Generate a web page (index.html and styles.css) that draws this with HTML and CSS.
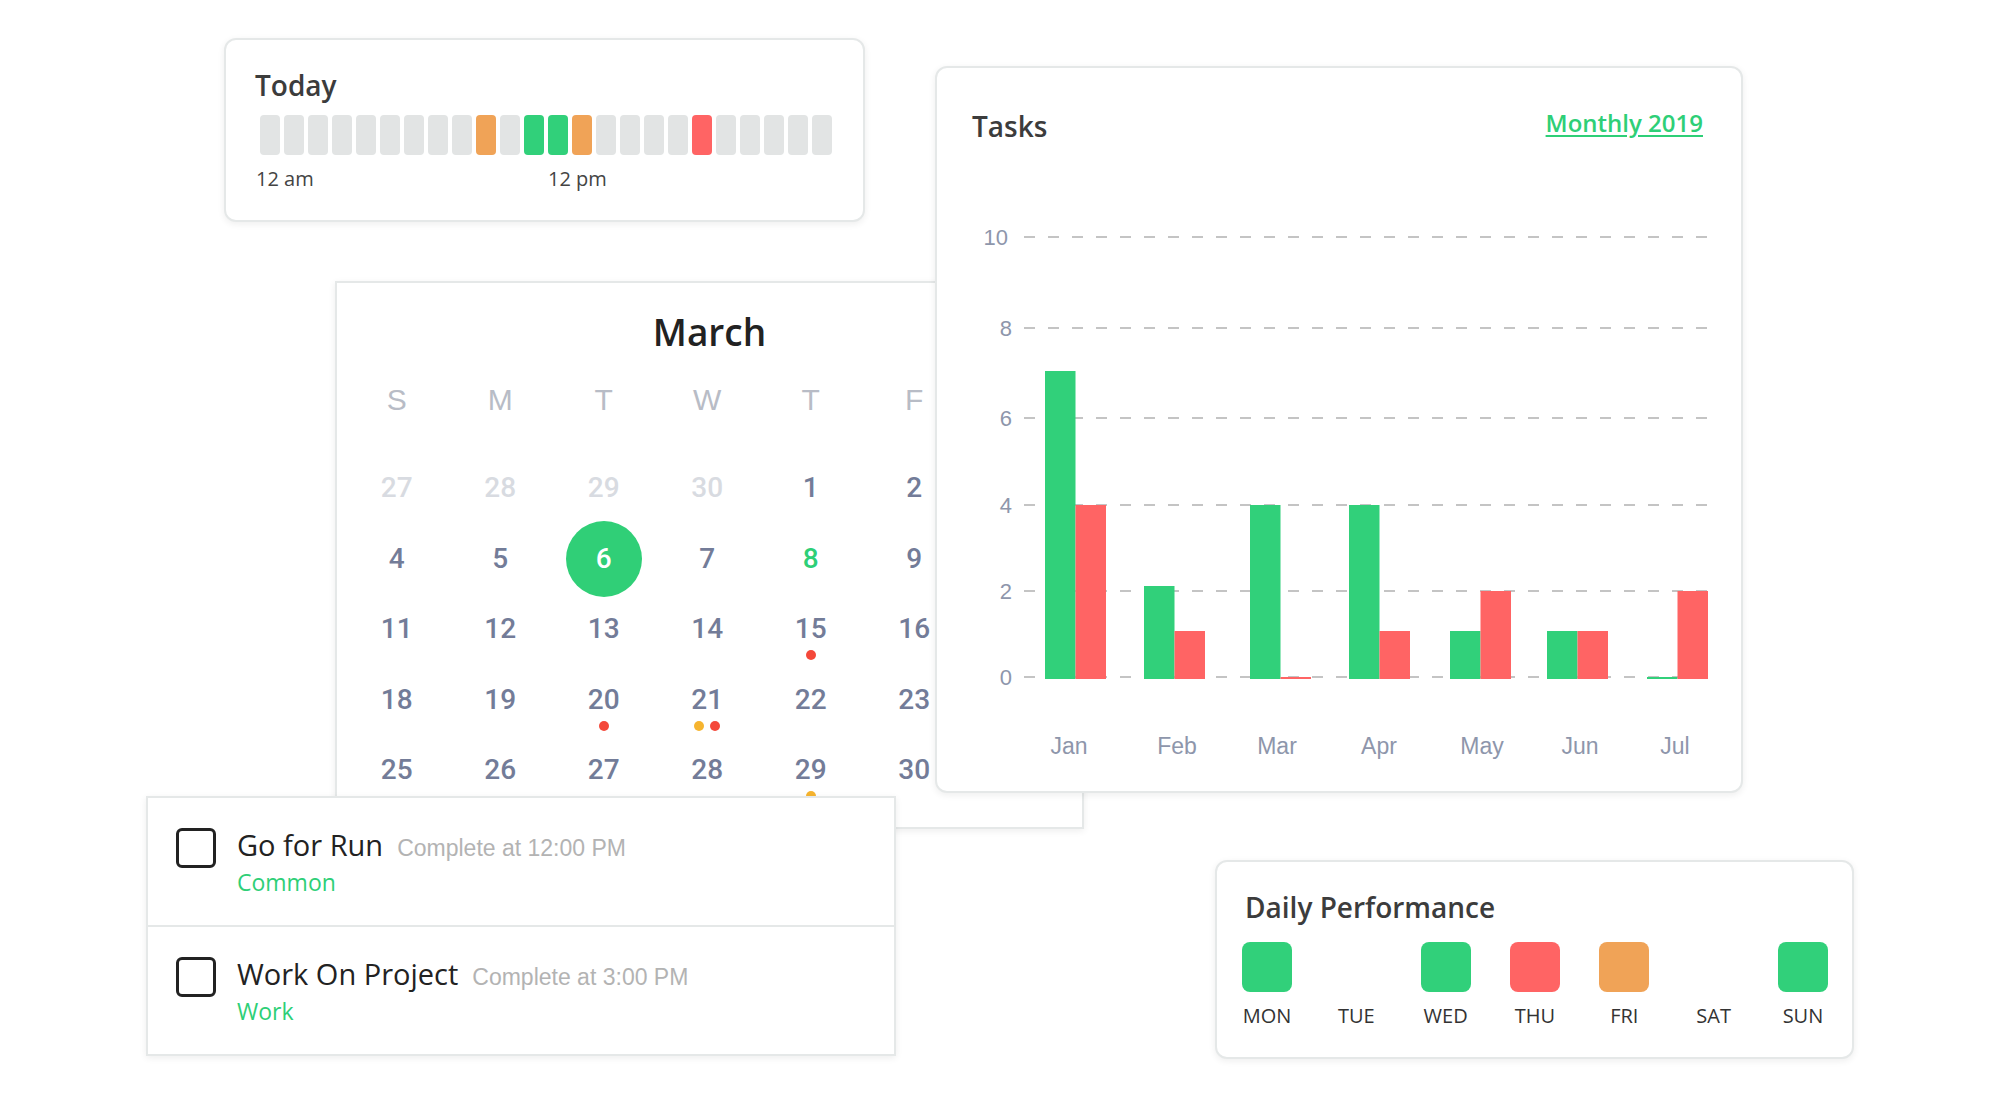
FILE: index.html
```html
<!DOCTYPE html>
<html>
  <head>
    <meta charset="utf-8">
    <meta name="viewport" content="width=device-width, initial-scale=1.0">
    <title>Tasks overview</title>
    <link rel="stylesheet" href="styles.css">
  </head>
  <body>
    <div class="stage">

      <!-- month calendar, sits behind the chart and the task list;
           the saturday column is fully covered so it stays empty -->
      <section class="card calendar">
        <h2 class="month">March</h2>
        <div class="weekdays">
          <span>S</span><span>M</span><span>T</span><span>W</span><span>T</span><span>F</span><span></span>
        </div>
        <div class="dates">
          <div class="day muted"><span class="num">27</span></div>
          <div class="day muted"><span class="num">28</span></div>
          <div class="day muted"><span class="num">29</span></div>
          <div class="day muted"><span class="num">30</span></div>
          <div class="day"><span class="num">1</span></div>
          <div class="day"><span class="num">2</span></div>
          <div class="day"></div>

          <div class="day"><span class="num">4</span></div>
          <div class="day"><span class="num">5</span></div>
          <div class="day current"><span class="num">6</span></div>
          <div class="day"><span class="num">7</span></div>
          <div class="day marked"><span class="num">8</span></div>
          <div class="day"><span class="num">9</span></div>
          <div class="day"></div>

          <div class="day"><span class="num">11</span></div>
          <div class="day"><span class="num">12</span></div>
          <div class="day"><span class="num">13</span></div>
          <div class="day"><span class="num">14</span></div>
          <div class="day"><span class="num">15</span><span class="dots"><i class="dot red"></i></span></div>
          <div class="day"><span class="num">16</span></div>
          <div class="day"></div>

          <div class="day"><span class="num">18</span></div>
          <div class="day"><span class="num">19</span></div>
          <div class="day"><span class="num">20</span><span class="dots"><i class="dot red"></i></span></div>
          <div class="day"><span class="num">21</span><span class="dots"><i class="dot amber"></i><i class="dot red"></i></span></div>
          <div class="day"><span class="num">22</span></div>
          <div class="day"><span class="num">23</span></div>
          <div class="day"></div>

          <div class="day"><span class="num">25</span></div>
          <div class="day"><span class="num">26</span></div>
          <div class="day"><span class="num">27</span></div>
          <div class="day"><span class="num">28</span></div>
          <div class="day"><span class="num">29</span><span class="dots"><i class="dot amber"></i></span></div>
          <div class="day"><span class="num">30</span></div>
          <div class="day"></div>
        </div>
      </section>

      <!-- monthly tasks chart -->
      <section class="card rounded tasks">
        <header class="card-head">
          <h2 class="card-title">Tasks</h2>
          <a class="period" href="#">Monthly 2019</a>
        </header>
        <svg class="chart" width="740" height="630" viewBox="0 0 740 630">
          <g class="grid">
            <line x1="52" y1="97" x2="736" y2="97"/>
            <line x1="52" y1="188" x2="736" y2="188"/>
            <line x1="52" y1="278" x2="736" y2="278"/>
            <line x1="52" y1="365" x2="736" y2="365"/>
            <line x1="52" y1="451" x2="736" y2="451"/>
            <line x1="52" y1="537" x2="736" y2="537"/>
          </g>
          <g class="axis y-axis">
            <text x="36" y="105">10</text>
            <text x="40" y="196">8</text>
            <text x="40" y="286">6</text>
            <text x="40" y="373">4</text>
            <text x="40" y="459">2</text>
            <text x="40" y="545">0</text>
          </g>
          <g class="bars done">
            <rect x="73" y="231" width="30.5" height="308"/>
            <rect x="172" y="446" width="30.5" height="93"/>
            <rect x="278" y="365" width="30.5" height="174"/>
            <rect x="377" y="365" width="30.5" height="174"/>
            <rect x="478" y="491" width="30.5" height="48"/>
            <rect x="575" y="491" width="30.5" height="48"/>
            <rect x="675" y="537" width="30.5" height="2"/>
          </g>
          <g class="bars missed">
            <rect x="103.5" y="365" width="30.5" height="174"/>
            <rect x="202.5" y="491" width="30.5" height="48"/>
            <rect x="308.5" y="537" width="30.5" height="2"/>
            <rect x="407.5" y="491" width="30.5" height="48"/>
            <rect x="508.5" y="451" width="30.5" height="88"/>
            <rect x="605.5" y="491" width="30.5" height="48"/>
            <rect x="705.5" y="451" width="30.5" height="88"/>
          </g>
          <g class="axis x-axis">
            <text x="97" y="614">Jan</text>
            <text x="205" y="614">Feb</text>
            <text x="305" y="614">Mar</text>
            <text x="407" y="614">Apr</text>
            <text x="510" y="614">May</text>
            <text x="608" y="614">Jun</text>
            <text x="703" y="614">Jul</text>
          </g>
        </svg>
      </section>

      <!-- hourly activity for today -->
      <section class="card rounded today">
        <h2 class="card-title">Today</h2>
        <div class="hours">
          <span class="hour"></span><span class="hour"></span><span class="hour"></span><span class="hour"></span>
          <span class="hour"></span><span class="hour"></span><span class="hour"></span><span class="hour"></span>
          <span class="hour"></span><span class="hour amber"></span><span class="hour"></span><span class="hour green"></span>
          <span class="hour green"></span><span class="hour amber"></span><span class="hour"></span><span class="hour"></span>
          <span class="hour"></span><span class="hour"></span><span class="hour red"></span><span class="hour"></span>
          <span class="hour"></span><span class="hour"></span><span class="hour"></span><span class="hour"></span>
        </div>
        <div class="hour-labels">
          <span class="am">12 am</span>
          <span class="pm">12 pm</span>
        </div>
      </section>

      <!-- task list -->
      <section class="card list">
        <div class="task">
          <span class="check"></span>
          <div class="task-body">
            <div class="task-line">
              <span class="task-name">Go for Run</span>
              <span class="task-due">Complete at 12:00 PM</span>
            </div>
            <div class="task-tag">Common</div>
          </div>
        </div>
        <div class="task">
          <span class="check"></span>
          <div class="task-body">
            <div class="task-line">
              <span class="task-name">Work On Project</span>
              <span class="task-due">Complete at 3:00 PM</span>
            </div>
            <div class="task-tag">Work</div>
          </div>
        </div>
      </section>

      <!-- daily performance -->
      <section class="card rounded daily">
        <h2 class="card-title">Daily Performance</h2>
        <div class="week">
          <div class="weekday"><span class="square green"></span><span class="label">MON</span></div>
          <div class="weekday"><span class="square none"></span><span class="label">TUE</span></div>
          <div class="weekday"><span class="square green"></span><span class="label">WED</span></div>
          <div class="weekday"><span class="square red"></span><span class="label">THU</span></div>
          <div class="weekday"><span class="square amber"></span><span class="label">FRI</span></div>
          <div class="weekday"><span class="square none"></span><span class="label">SAT</span></div>
          <div class="weekday"><span class="square green"></span><span class="label">SUN</span></div>
        </div>
      </section>

    </div>
  </body>
</html>
```

FILE: styles.css
```css
body {
  margin: 0;
  background-color: #fff;
  font-family: "Open Sans", "Liberation Sans", sans-serif;
  color: #222;
}

h2 {
  margin: 0;
}

.stage {
  position: relative;
  width: 2000px;
  height: 1100px;
  overflow: hidden;
}

/* cards float over each other like sheets on a desk */
.card {
  position: absolute;
  box-sizing: border-box;
  background-color: #fff;
  border: 2px solid #e5e8e8;
  box-shadow: 0 2px 7px rgba(0, 0, 0, 0.07);
}

.rounded {
  border-radius: 12px;
}

.card-title {
  font-size: 28px;
  line-height: 28px;
  font-weight: 600;
  color: #3c3c3c;
}

/* today */
.today {
  left: 224px;
  top: 38px;
  width: 641px;
  height: 184px;
  padding: 31px 0 0 29px;
  z-index: 4;
}

.hours,
.hour-labels {
  display: grid;
  grid-template-columns: repeat(24, 20px);
  column-gap: 4px;
}

.hours {
  margin: 16px 0 0 5px;
}

.hour {
  height: 40px;
  border-radius: 4px;
  background-color: #e2e4e4;
}

.hour.green { background-color: #31d07a; }
.hour.amber { background-color: #f0a357; }
.hour.red { background-color: #ff6464; }

.hour-labels {
  margin: 14px 0 0 1px;
  font-size: 20px;
  line-height: 20px;
  color: #444;
}

.hour-labels .am { grid-column: 1 / span 8; }
.hour-labels .pm { grid-column: 13 / span 8; margin-left: 4px; }

/* calendar */
.calendar {
  left: 335px;
  top: 281px;
  width: 749px;
  height: 548px;
  padding: 30px 8px 0 8px;
  z-index: 1;
}

.month {
  text-align: center;
  font-size: 37px;
  line-height: 37px;
  font-weight: 600;
  color: #222;
}

.weekdays,
.dates {
  display: grid;
  grid-template-columns: repeat(7, 103.5px);
  font-family: "Liberation Sans", Arial, sans-serif;
}

.weekdays {
  margin-top: 35px;
  height: 30px;
  font-size: 30px;
  line-height: 30px;
  color: #b8bcc6;
  text-align: center;
}

.dates {
  margin-top: 53px;
  grid-auto-rows: 70.5px;
}

.day {
  display: flex;
  flex-direction: column;
  align-items: center;
}

.num {
  height: 40px;
  font-family: Roboto, "Liberation Sans", Arial, sans-serif;
  font-size: 28px;
  font-weight: 500;
  line-height: 40px;
  color: #737c98;
}

.day.muted .num { color: #d8dbe1; }
.day.marked .num { color: #2ecf77; }

.day.current .num {
  width: 76px;
  height: 76px;
  margin: -18px 0;
  border-radius: 50%;
  line-height: 76px;
  text-align: center;
  background-color: #30cf77;
  color: #fff;
}

.dots {
  display: flex;
  gap: 6px;
  margin-top: 1px;
}

.dot {
  width: 10px;
  height: 10px;
  border-radius: 50%;
}

.dot.red { background-color: #f4483a; }
.dot.amber { background-color: #f6b42f; }

/* tasks chart */
.tasks {
  left: 935px;
  top: 66px;
  width: 808px;
  height: 727px;
  padding: 44px 38px 0 35px;
  z-index: 2;
}

.card-head {
  display: flex;
  justify-content: space-between;
  align-items: flex-start;
}

.period {
  margin-top: -1px;
  font-size: 24px;
  line-height: 24px;
  font-weight: 600;
  color: #2ecf77;
  text-decoration: underline;
  text-underline-offset: 3px;
}

.chart {
  display: block;
  overflow: visible;
}

.grid line {
  stroke: #c4c4c4;
  stroke-width: 2;
  stroke-dasharray: 11 13;
}

.axis text {
  font-family: "Liberation Sans", Arial, sans-serif;
  fill: #8e96ab;
}

.y-axis text {
  font-size: 22px;
  text-anchor: end;
}

.x-axis text {
  font-size: 23px;
  text-anchor: middle;
}

.bars.done rect { fill: #31d07a; }
.bars.missed rect { fill: #ff6464; }

/* task list */
.list {
  left: 146px;
  top: 796px;
  width: 750px;
  height: 260px;
  z-index: 3;
}

.task {
  display: flex;
  gap: 21px;
  height: 127px;
  padding: 30px 28px 0 28px;
  box-sizing: border-box;
}

.task + .task {
  height: 129px;
  border-top: 2px solid #e5e8e8;
}

.check {
  flex: none;
  box-sizing: border-box;
  width: 40px;
  height: 40px;
  border: 3px solid #222;
  border-radius: 6px;
}

.task-body {
  margin-top: 2px;
}

.task-line {
  display: flex;
  align-items: baseline;
}

.task-name {
  font-size: 29px;
  line-height: 29px;
  color: #222;
}

.task-due {
  margin-left: 14px;
  font-family: "Liberation Sans", Arial, sans-serif;
  font-size: 23px;
  line-height: 23px;
  color: #b3b3b3;
}

.task-tag {
  margin-top: 11px;
  font-size: 23px;
  line-height: 23px;
  color: #2ecf77;
}

/* daily performance */
.daily {
  left: 1215px;
  top: 860px;
  width: 639px;
  height: 199px;
  padding: 31px 24px 0 25px;
  z-index: 4;
}

.daily .card-title {
  margin-left: 3px;
}

.week {
  display: flex;
  justify-content: space-between;
  margin-top: 21px;
}

.weekday {
  display: flex;
  flex-direction: column;
  align-items: center;
}

.square {
  width: 50px;
  height: 50px;
  border-radius: 8px;
}

.square.green { background-color: #31d07a; }
.square.red { background-color: #ff6464; }
.square.amber { background-color: #f0a357; }
.square.none { visibility: hidden; }

.label {
  margin-top: 14px;
  font-size: 20px;
  line-height: 20px;
  color: #333;
}
```
